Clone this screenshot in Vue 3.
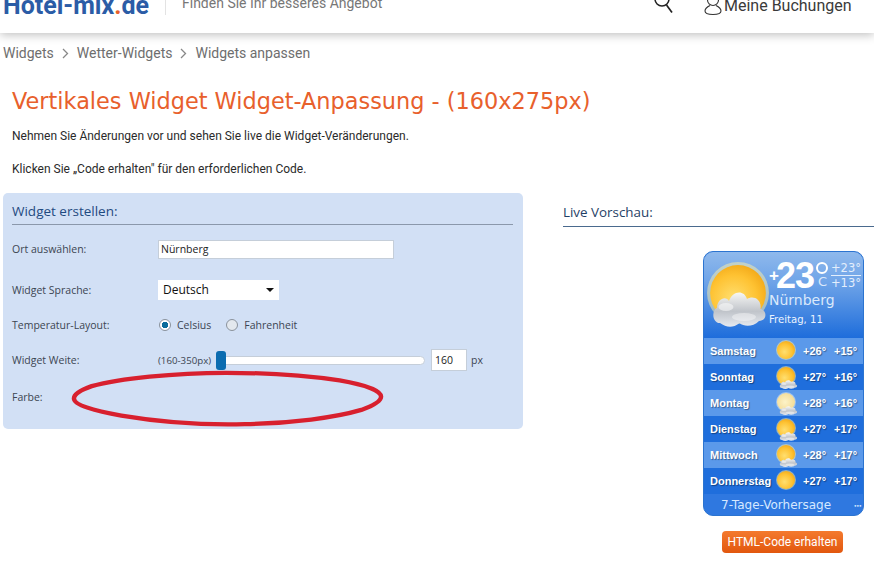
<template>
  <div class="page">
    <!-- Header -->
    <header class="top">
      <div class="logo">Hotel-mix<span class="dot">.</span>de</div>
      <div class="tagline">Finden Sie Ihr besseres Angebot</div>
      <svg class="search" width="20" height="24" viewBox="0 0 20 24">
        <circle cx="8" cy="8" r="7" fill="none" stroke="#222" stroke-width="1.5" />
        <path d="M12.500 14L18 21.500" stroke="#222" stroke-width="1.7" fill="none" />
      </svg>
      <div class="account">
        <svg width="18" height="24" viewBox="0 0 18 24">
          <circle cx="9" cy="8" r="5.500" fill="none" stroke="#333" stroke-width="1.100" />
          <path d="M6 13.500C3 15 1 16.500 1 19c0 2 3 3.500 8 3.500s8-1.500 8-3.500c0-2.500-2-4-5-5.500" fill="none" stroke="#333" stroke-width="1.100" />
        </svg>
        <span>Meine Buchungen</span>
      </div>
    </header>

    <!-- Breadcrumbs -->
    <nav class="crumbs">
      <template v-for="(c, i) in crumbs" :key="c">
        <span>{{ c }}</span>
        <svg v-if="i < crumbs.length - 1" width="7" height="11" viewBox="0 0 7 11">
          <path d="M1 1l4.500 4.500L1 10" fill="none" stroke="#888" stroke-width="1.300" />
        </svg>
      </template>
    </nav>

    <section class="intro">
      <h1>Vertikales Widget Widget-Anpassung - (160x275px)</h1>
      <p>Nehmen Sie Änderungen vor und sehen Sie live die Widget-Veränderungen.</p>
      <p>Klicken Sie „Code erhalten" für den erforderlichen Code.</p>
    </section>

    <div class="cols">
      <!-- Form -->
      <div class="panel">
        <h2>Widget erstellen:</h2>

        <div class="row r-ort">
          <label>Ort auswählen:</label>
          <div class="text-input">Nürnberg</div>
        </div>
        <div class="row r-lang">
          <label>Widget Sprache:</label>
          <div class="select">
            Deutsch
            <i class="caret"></i>
          </div>
        </div>
        <div class="row r-temp">
          <label>Temperatur-Layout:</label>
          <div class="radios">
            <span class="radio on"></span><span class="rlabel">Celsius</span>
            <span class="radio"></span><span class="rlabel">Fahrenheit</span>
          </div>
        </div>
        <div class="row r-width">
          <label>Widget Weite:</label>
          <div class="slider-wrap">
            <span class="range">(160-350px)</span>
            <div class="slider"><span class="thumb"></span></div>
            <div class="num">160</div>
            <span class="px">px</span>
          </div>
        </div>
        <div class="row r-color">
          <label>Farbe:</label>
        </div>

        <svg class="scribble" width="316" height="59" viewBox="0 0 320 62" preserveAspectRatio="none">
          <path d="M158 4C105 4 50 10 22 18 8 23 4 27 4 31c0 7 22 13 48 18 40 7 85 10 125 9 48-1 92-7 118-15 14-5 20-10 20-14 0-6-14-12-42-17C240 7 205 4 158 4z" fill="none" stroke="#d8202e" stroke-width="4.500" />
        </svg>
      </div>

      <!-- Preview -->
      <div class="preview">
        <h3>Live Vorschau:</h3>

        <div class="widget">
          <div class="hero">
            <svg class="hero-sun" width="66" height="76" viewBox="0 0 66 76">
              <use href="#sun-shape" transform="translate(0 9) scale(3.100)" />
              <use href="#cloud-shape" transform="translate(4 26) scale(3 4)" />
            </svg>
            <div class="hero-main">
              <div class="now">
                <span class="plus">+</span><span class="deg">23</span>
                <div class="unit"><span class="ring"></span><span class="c">C</span></div>
                <div class="minmax"><span>+23°</span><span>+13°</span></div>
              </div>
              <div class="city">Nürnberg</div>
              <div class="date">Freitag, 11</div>
            </div>
          </div>

          <div v-for="d in days" :key="d.name" class="day" :class="{ alt: d.alt }">
            <span class="dname">{{ d.name }}</span>
            <svg class="dicon" width="24" height="24" viewBox="0 0 24 24">
              <use :href="d.pale ? '#sun-pale' : '#sun-shape'" transform="translate(1 1)" />
              <use v-if="d.cloud" href="#cloud-shape" transform="translate(4 12)" />
            </svg>
            <span class="hi">{{ d.hi }}</span>
            <span class="lo">{{ d.lo }}</span>
          </div>

          <div class="foot">
            <span>7-Tage-Vorhersage</span>
            <i class="dots">•••</i>
          </div>
        </div>

        <button class="code-btn">HTML-Code erhalten</button>
      </div>
    </div>

    <!-- shared weather shapes -->
    <svg width="0" height="0" class="defs">
      <defs>
        <radialGradient id="sunGrad" cx="0.42" cy="0.6" r="0.7">
          <stop offset="0" stop-color="#ffdf70" />
          <stop offset="0.6" stop-color="#fec232" />
          <stop offset="1" stop-color="#f0a312" />
        </radialGradient>
        <radialGradient id="paleGrad" cx="0.45" cy="0.5" r="0.7">
          <stop offset="0" stop-color="#fdf3c8" />
          <stop offset="1" stop-color="#f2d68a" />
        </radialGradient>
        <linearGradient id="cloudGrad" x1="0" y1="0" x2="0" y2="1">
          <stop offset="0" stop-color="#f7f7f5" />
          <stop offset="0.55" stop-color="#c0c4ca" />
          <stop offset="1" stop-color="#e6eaf0" />
        </linearGradient>
        <g id="sun-shape">
          <circle cx="10" cy="10" r="10" fill="#fff2a8" opacity="0.5" />
          <circle cx="10" cy="10" r="9" fill="url(#sunGrad)" />
        </g>
        <g id="sun-pale">
          <circle cx="10" cy="10" r="10" fill="#fff" opacity="0.4" />
          <circle cx="10" cy="10" r="9" fill="url(#paleGrad)" />
        </g>
        <g id="cloud-shape">
          <path d="M3 11C0.500 11 0 8 2 7.200 2 5 5 4 6 5.500 7 3 11 2.500 12 5c2-1 5 0 4.500 2.500C19 8 18.500 10.500 16 10.500 14 12 11 12 9.500 11 7 12.500 5 12 3 11z" fill="url(#cloudGrad)" />
          <ellipse cx="5" cy="7" rx="2.500" ry="1" fill="#fff" opacity="0.5" />
          <ellipse cx="11" cy="9.500" rx="4" ry="1" fill="#fff" opacity="0.4" />
        </g>
      </defs>
    </svg>
  </div>
</template>

<script setup>
const crumbs = ['Widgets', 'Wetter-Widgets', 'Widgets anpassen']

const days = [
  { name: 'Samstag', hi: '+26°', lo: '+15°', alt: true },
  { name: 'Sonntag', hi: '+27°', lo: '+16°', cloud: true },
  { name: 'Montag', hi: '+28°', lo: '+16°', alt: true, cloud: true, pale: true },
  { name: 'Dienstag', hi: '+27°', lo: '+17°', cloud: true },
  { name: 'Mittwoch', hi: '+28°', lo: '+17°', alt: true, cloud: true },
  { name: 'Donnerstag', hi: '+27°', lo: '+17°' }
]
</script>

<style>
html, body {
  margin: 0;
  background: #fff;
  overflow: hidden;
}
</style>

<style scoped>
.page {
  width: 874px;
  height: 581px;
  overflow: hidden;
  font-family: Roboto, sans-serif;
  color: #333;
}

.top {
  height: 33px;
  display: flex;
  align-items: flex-start;
  overflow: hidden;
  box-shadow: 0 2px 9px rgba(0,0,0,0.25);
  position: relative;
  background: #fff;
}
.logo {
  margin: -10px 0 0 3px;
  width: 162px;
  height: 25px;
  border-right: 1px solid #e3e3e3;
  font-size: 25px;
  font-weight: 700;
  line-height: 32px;
  color: #2b5ca6;
  white-space: nowrap;
}
.dot { color: #e8622a; }
.tagline {
  margin: -10px 0 0 16px;
  width: 472px;
  font-size: 14px;
  line-height: 27px;
  color: #777;
}
.search { margin-top: -9px; }
.account {
  margin: -9px 0 0 30px;
  display: flex;
  align-items: center;
  gap: 2px;
  font-size: 16px;
  color: #3a3a3a;
  line-height: 30px;
}
.account svg { margin-top: -4px; }

.crumbs {
  display: flex;
  align-items: center;
  gap: 8px;
  height: 20px;
  margin-top: 10px;
  padding-left: 3px;
  font-size: 14px;
  color: #6e6e6e;
}

.intro {
  padding-left: 12px;
}
.intro h1 {
  margin: 24px 0 0;
  height: 29px;
  font-family: "DejaVu Sans", sans-serif;
  font-weight: 400;
  font-size: 22.400px;
  line-height: 29px;
  color: #e8602c;
  white-space: nowrap;
}
.intro p {
  margin: 13px 0 0;
  height: 14px;
  font-size: 12px;
  line-height: 14px;
  color: #2a2a2a;
}
.intro p + p { margin-top: 19px; }

.cols {
  display: flex;
  gap: 40px;
  margin-top: 17px;
  padding-left: 3px;
}

.panel {
  position: relative;
  box-sizing: border-box;
  width: 520px;
  height: 236px;
  padding: 0 10px 0 9px;
  background: #d2e0f5;
  border-radius: 5px;
  font-family: "Open Sans", sans-serif;
  font-size: 10.500px;
  color: #3c4552;
}
.panel h2 {
  margin: 0;
  padding-top: 8px;
  height: 23px;
  font-size: 13.500px;
  font-weight: 400;
  line-height: 20px;
  color: #1f4a80;
  border-bottom: 1px solid #8b98ab;
}
.row {
  display: flex;
  align-items: center;
}
.row label { width: 146px; flex: none; }
.r-ort { height: 20px; margin-top: 14px; }
.r-lang { height: 20px; margin-top: 21px; }
.r-temp { height: 20px; margin-top: 15px; }
.r-width { height: 22px; margin-top: 14px; }
.r-color { height: 20px; margin-top: 16px; }

.text-input {
  box-sizing: border-box;
  width: 236px;
  height: 19px;
  background: #fff;
  border: 1px solid #c5ced9;
  padding-left: 2px;
  font-size: 10.500px;
  line-height: 17px;
  color: #222;
}
.select {
  position: relative;
  box-sizing: border-box;
  width: 121px;
  height: 20px;
  background: #fff;
  padding-left: 5px;
  font-size: 12px;
  line-height: 20px;
  color: #111;
}
.caret {
  position: absolute;
  right: 5px;
  top: 8px;
  border: 4px solid transparent;
  border-top-color: #111;
  border-bottom: 0;
}
.radios {
  display: flex;
  align-items: center;
  padding-left: 1px;
}
.radio {
  box-sizing: border-box;
  width: 12px;
  height: 12px;
  border-radius: 50%;
  border: 1px solid #8a929c;
  background: #e3e8ee;
}
.radio.on {
  background: radial-gradient(circle, #0c6d9c 0 3px, #fff 3.500px);
}
.rlabel { margin: 0 15px 0 6px; }

.slider-wrap {
  display: flex;
  align-items: center;
  font-size: 9.700px;
}
.range { width: 58px; flex: none; }
.slider {
  position: relative;
  width: 209px;
  height: 9px;
  box-sizing: border-box;
  background: #fff;
  border: 1px solid #c5ced9;
  border-radius: 5px;
}
.thumb {
  position: absolute;
  left: -1px;
  top: -6px;
  width: 10px;
  height: 19px;
  border-radius: 3px;
  background: #0b6cb0;
}
.num {
  box-sizing: border-box;
  width: 36px;
  height: 22px;
  margin-left: 6px;
  padding-left: 3px;
  background: #fff;
  border: 1px solid #c5ced9;
  font-size: 10.500px;
  line-height: 20px;
  color: #222;
}
.px { margin-left: 4px; font-size: 10.500px; }
.scribble {
  position: absolute;
  left: 67px;
  top: 176px;
}

.preview {
  flex: 1;
  min-width: 0;
}
.preview h3 {
  margin: 9px 0 0;
  height: 24px;
  font-family: "Open Sans", sans-serif;
  font-weight: 400;
  font-size: 13.400px;
  line-height: 20px;
  color: #1f3f66;
  border-bottom: 1px solid #4a6a8e;
}
.widget {
  box-sizing: border-box;
  width: 161px;
  height: 265px;
  margin: 24px 0 0 140px;
  border: 1px solid #2c74d0;
  border-radius: 10px;
  overflow: hidden;
  background: #2f78e0;
  color: #fff;
  font-family: "Liberation Sans", sans-serif;
}
.hero {
  display: flex;
  height: 86px;
  background: linear-gradient(#8fb9ec, #6fa4e8 35%, #1e6ddb);
}
.hero-sun {
  flex: none;
  overflow: visible;
  margin: 1px -4px 0 3px;
}
.hero-main { min-width: 0; flex: 1; position: relative; }
.now {
  display: flex;
  align-items: center;
  height: 31px;
  margin-top: 8px;
}
.plus {
  font-size: 17px;
  font-weight: 700;
  margin-right: -3px;
}
.deg {
  font-size: 36px;
  font-weight: 700;
  letter-spacing: -1px;
  line-height: 31px;
}
.unit {
  display: flex;
  flex-direction: column;
  align-items: center;
  margin-left: 2px;
  width: 13px;
}
.ring {
  box-sizing: border-box;
  width: 12px;
  height: 12px;
  border: 2.500px solid #fff;
  border-radius: 50%;
}
.c {
  font-family: "DejaVu Sans", sans-serif;
  font-size: 13px;
  line-height: 16px;
  color: #dbe9fb;
}
.minmax {
  display: flex;
  flex-direction: column;
  margin-left: 2px;
  font-family: "DejaVu Sans", sans-serif;
  font-size: 11.500px;
  line-height: 14px;
  color: #e3eefc;
}
.minmax span:first-child { border-bottom: 1px solid #e3eefc; }
.city {
  margin-top: 0;
  font-family: "DejaVu Sans", sans-serif;
  font-size: 14px;
  line-height: 18px;
  color: #dbe9fb;
}
.date {
  margin-top: 4px;
  font-family: "DejaVu Sans", sans-serif;
  font-size: 10.100px;
  line-height: 14px;
  color: #eaf3fe;
}
.day {
  display: flex;
  align-items: center;
  height: 26px;
  padding-left: 6px;
  background: #1f6edc;
  font-size: 11px;
  font-weight: 700;
  text-shadow: 1px 1px 1px rgba(0,0,0,0.4);
}
.day.alt { background: #5b99ea; }
.dname { width: 65px; flex: none; white-space: nowrap; }
.dicon { flex: none; margin-right: 4px; }
.hi { width: 31px; flex: none; }
.foot {
  display: flex;
  align-items: center;
  height: 22px;
  padding-left: 17px;
  font-family: "DejaVu Sans", sans-serif;
  font-size: 12px;
  color: #d6e8ff;
}
.dots {
  margin-left: auto;
  margin-right: 2px;
  font-style: normal;
  font-size: 6px;
  letter-spacing: -1px;
}
.code-btn {
  display: block;
  box-sizing: border-box;
  width: 121px;
  height: 22px;
  margin: 15px 0 0 159px;
  padding: 0;
  border: none;
  border-radius: 4px;
  background: linear-gradient(#f47a2e, #e2570e);
  color: #fff;
  font-family: Roboto, sans-serif;
  font-size: 12px;
}
.defs { position: absolute; }
</style>
